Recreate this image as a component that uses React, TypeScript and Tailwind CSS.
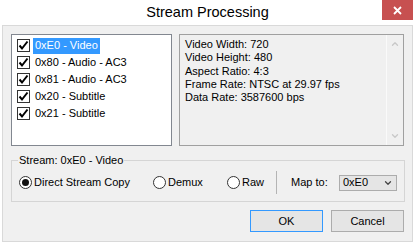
import { ChevronDown, ChevronUp } from "lucide-react";

const streams = [
  { id: "e0", label: "0xE0 - Video", selected: true },
  { id: "80", label: "0x80 - Audio - AC3", selected: false },
  { id: "81", label: "0x81 - Audio - AC3", selected: false },
  { id: "20", label: "0x20 - Subtitle", selected: false },
  { id: "21", label: "0x21 - Subtitle", selected: false },
];

const info = [
  "Video Width: 720",
  "Video Height: 480",
  "Aspect Ratio: 4:3",
  "Frame Rate: NTSC at 29.97 fps",
  "Data Rate: 3587600 bps",
];

function CheckBox() {
  return (
    <span className="flex h-[13px] w-[13px] shrink-0 items-center justify-center border border-[#333] bg-white">
      <svg width="11" height="11" viewBox="0 0 11 11">
        <path d="M1.5 5.5 L4 8.5 L9.5 1.5" fill="none" stroke="#000" strokeWidth="2" />
      </svg>
    </span>
  );
}

function Radio({ checked, label, width }: { checked?: boolean; label: string; width: string }) {
  return (
    <div className={`flex items-center gap-[2px] ${width}`}>
      <span className="flex h-[13px] w-[13px] shrink-0 items-center justify-center rounded-full border border-[#333] bg-white">
        {checked && <span className="h-[7px] w-[7px] rounded-full bg-[#111]" />}
      </span>
      <span>{label}</span>
    </div>
  );
}

export default function App() {
  return (
    <div
      className="h-[244px] w-[415px] overflow-hidden bg-white text-[11px] text-black"
      style={{ fontFamily: '"Liberation Sans", Arial, sans-serif' }}
    >
      {/* Title bar */}
      <div className="relative flex h-[25px] items-center justify-center">
        <span className="text-[14.5px] leading-none text-[#000]">Stream Processing</span>
        <div className="absolute right-[2px] top-0 flex h-[20px] w-[31px] items-center justify-center bg-[#c75050]">
          <svg width="9" height="9" viewBox="0 0 9 9">
            <path d="M1 1 L8 8 M8 1 L1 8" stroke="#fff" strokeWidth="1.8" />
          </svg>
        </div>
      </div>

      {/* Client area */}
      <div className="mx-[2px] flex h-[217px] flex-col border border-[#d9d9d9] bg-[#f0f0f0] px-[8px] pt-[8px]">
        <div className="flex gap-[7px]">
          <div className="h-[112px] w-[161px] border border-[#828790] bg-white pl-[5px] pt-[2px]">
            {streams.map((s) => (
              <div key={s.id} className="flex h-[17px] items-center gap-[3px]">
                <CheckBox />
                <span
                  className={`flex h-[16px] items-center px-[2px] leading-none ${
                    s.selected ? "bg-[#3399ff] text-white" : ""
                  }`}
                >
                  {s.label}
                </span>
              </div>
            ))}
          </div>
          <div className="flex h-[112px] w-[225px] border border-[#a0a0a0] bg-[#f0f0f0]">
            <div className="flex-1 pl-[5px] pt-[3px] leading-[13.3px]">
              {info.map((l) => (
                <div key={l}>{l}</div>
              ))}
            </div>
            <div className="flex w-[17px] flex-col items-center justify-between border-l border-[#fafafa] py-[4px] text-[#c8c8c8]">
              <ChevronUp size={10} strokeWidth={3} />
              <ChevronDown size={10} strokeWidth={3} />
            </div>
          </div>
        </div>

        <fieldset className="mt-[7px] h-[49px] border border-[#d5d5d5] px-[7px]">
          <legend className="ml-[-1px] px-[1px] leading-[14px]">Stream: 0xE0 - Video</legend>
          <div className="flex h-[30px] items-center pt-[1px]">
            <Radio checked label="Direct Stream Copy" width="w-[134px]" />
            <Radio label="Demux" width="w-[74px]" />
            <Radio label="Raw" width="w-[49px]" />
            <div className="h-[23px] w-px bg-[#b4b4b4]" />
            <span className="ml-[14px] w-[48px]">Map to:</span>
            <div className="flex h-[16px] w-[58px] items-center justify-between border border-[#acacac] bg-[#e5e5e5] pl-[3px] pr-[3px]">
              <span>0xE0</span>
              <ChevronDown size={10} strokeWidth={3} className="text-[#444]" />
            </div>
          </div>
        </fieldset>

        <div className="mt-[8px] flex justify-end gap-[8px]">
          <button className="h-[22px] w-[73px] border border-[#3399ff] bg-[#e5e5e5]">OK</button>
          <button className="h-[22px] w-[73px] border border-[#acacac] bg-[#e5e5e5]">Cancel</button>
        </div>
      </div>
    </div>
  );
}
